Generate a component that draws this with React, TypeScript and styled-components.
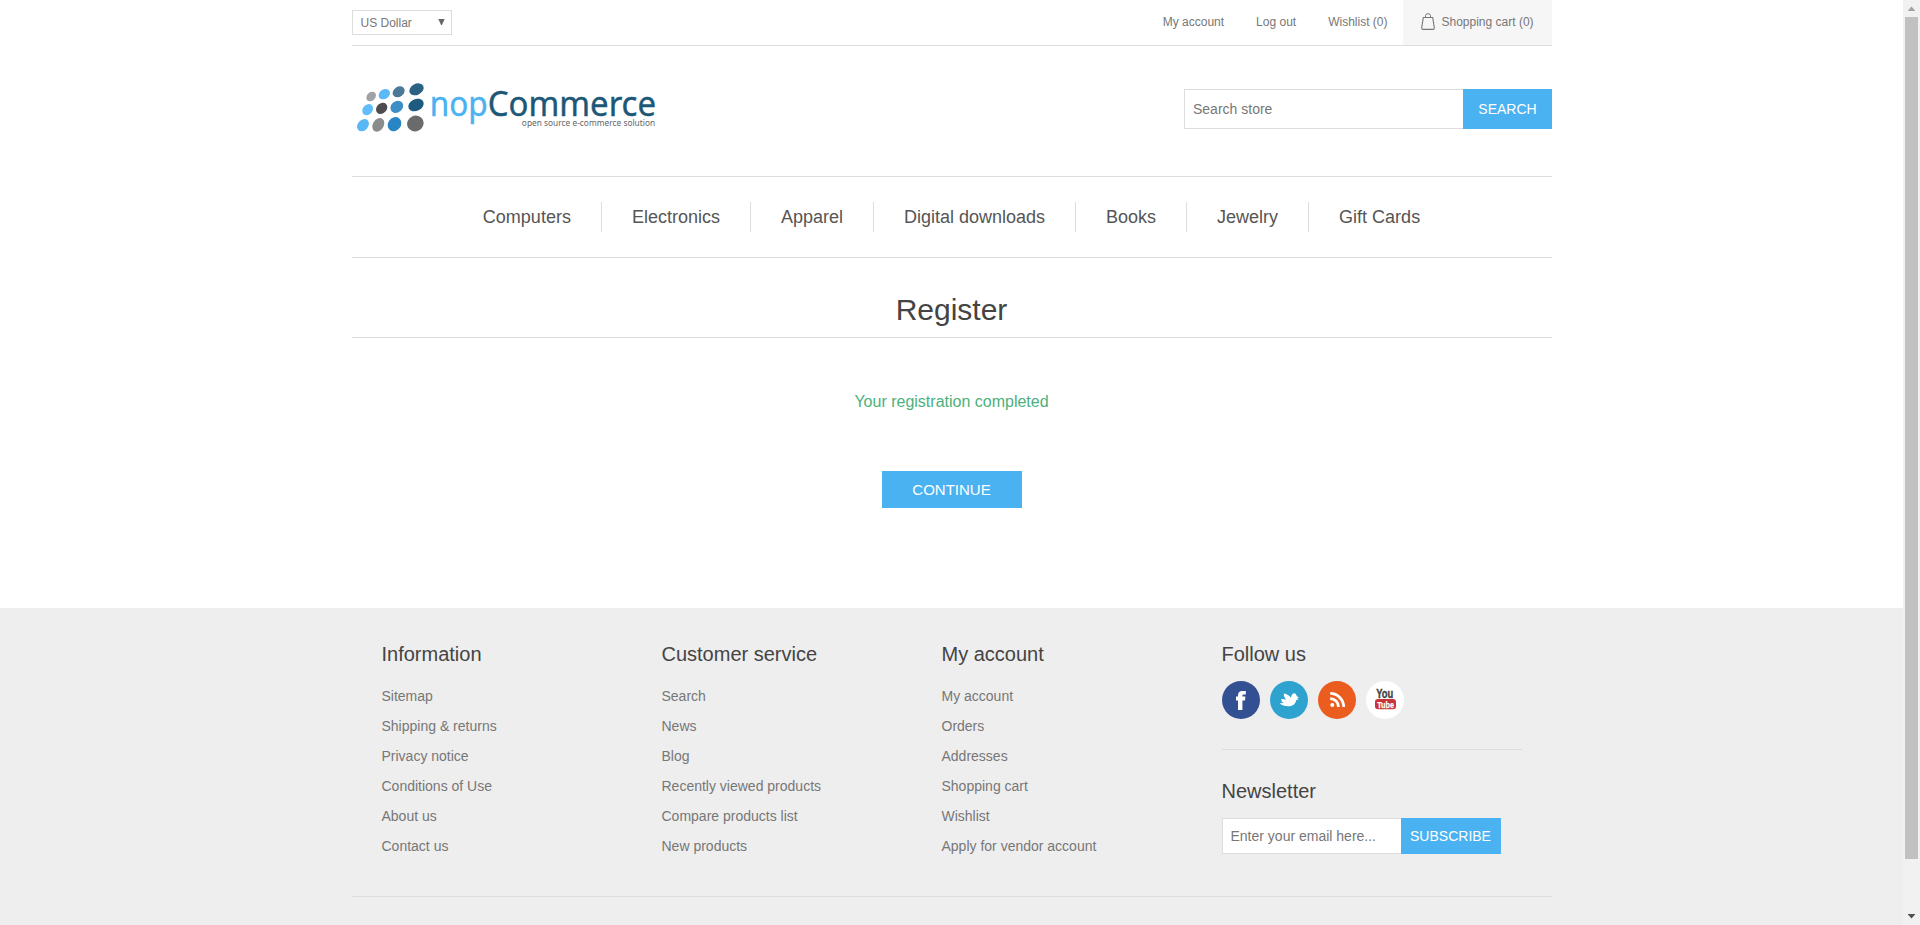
import React from 'react';
import styled, { createGlobalStyle } from 'styled-components';

const GlobalStyle = createGlobalStyle`
  * { box-sizing: border-box; margin: 0; padding: 0; }
  html, body { height: 925px; overflow: hidden; background: #fff; }
  body { font: 14px "Liberation Sans", Arial, sans-serif; color: #777; }
  a { color: inherit; text-decoration: none; }
  ul { list-style: none; }
  input, button { font-family: inherit; border-radius: 0; outline: none; }
`;

const Screen = styled.div`
  display: flex;
  width: 1920px;
  height: 925px;
  overflow: hidden;
`;

const Page = styled.div`
  width: 1903px;
  flex: none;
`;

const Wrapper = styled.div`
  width: 1200px;
  margin: 0 auto;
`;

const HeaderUpper = styled.div`
  display: flex;
  justify-content: space-between;
  height: 46px;
  border-bottom: 1px solid #ddd;
  font-size: 12px;
`;

const CurrencySelect = styled.div`
  display: flex;
  align-items: center;
  justify-content: space-between;
  width: 100px;
  height: 25px;
  margin-top: 10px;
  padding: 0 6px 0 8px;
  border: 1px solid #ddd;
`;

const SelectArrow = styled.svg`
  display: block;
  margin-top: -2px;
`;

const HeaderLinks = styled.div`
  display: flex;
  height: 45px;
  line-height: 45px;
`;

const HeaderLink = styled.a`
  margin-right: 32px;
  &:last-of-type { margin-right: 0; }
`;

const CartLink = styled.div`
  display: flex;
  align-items: center;
  width: 149px;
  margin-left: 15px;
  padding-left: 18px;
  gap: 7px;
  background: #f6f6f6;
`;

const CartIcon = styled.svg`
  display: block;
  margin-top: -3px;
`;

const LinkLabel = styled.span`
  display: block;
  line-height: 14px;
  margin-top: 15px;
`;

const HeaderLower = styled.div`
  display: flex;
  justify-content: space-between;
  height: 130px;
  padding-top: 29px;
`;

const SearchForm = styled.form`
  display: flex;
  margin: 14px -0.5px 0 0;
  height: 40px;
`;

const TextInput = styled.input<{ $width: number }>`
  width: ${(p) => p.$width}px;
  height: 100%;
  padding: 0 8px;
  border: 1px solid #ddd;
  border-right: 0;
  background: #fff;
  color: #777;
  font-size: 14px;
  &::placeholder { color: #777; opacity: 1; }
`;

const ActionButton = styled.button<{ $width: number; $size?: number }>`
  width: ${(p) => p.$width}px;
  height: 100%;
  border: 0;
  background: #4ab2f1;
  color: #fff;
  font-size: ${(p) => p.$size ?? 14}px;
  text-align: center;
`;

const Menu = styled.ul`
  display: flex;
  justify-content: center;
  align-items: center;
  height: 82px;
  border-top: 1px solid #ddd;
  border-bottom: 1px solid #ddd;
`;

const MenuItem = styled.li`
  height: 30px;
  padding: 0 30px;
  border-left: 1px solid #ddd;
  font-size: 18px;
  line-height: 31px;
  color: #555;
  &:first-child { border-left: 0; }
`;

const Main = styled.div`
  display: flex;
  flex-direction: column;
  align-items: center;
  height: 350px;
`;

const PageTitle = styled.h1`
  width: 100%;
  height: 80px;
  padding-top: 34px;
  border-bottom: 1px solid #ddd;
  font-size: 30px;
  font-weight: 400;
  line-height: 35px;
  text-align: center;
  color: #444;
`;

const Result = styled.div`
  margin-top: 55px;
  font-size: 16px;
  line-height: 18px;
  color: #4cb17c;
`;

const ContinueRow = styled.div`
  height: 37px;
  margin-top: 60px;
`;

const Footer = styled.footer`
  height: 317px;
  background: #eee;
`;

const FooterUpper = styled.div`
  display: flex;
  width: 1200px;
  height: 289px;
  margin: 0 auto;
  padding: 35px 30px 0;
  border-bottom: 1px solid #ddd;
`;

const FooterBlock = styled.div<{ $width: number }>`
  width: ${(p) => p.$width}px;
  flex: none;
`;

const BlockTitle = styled.h2`
  font-size: 20px;
  font-weight: 400;
  line-height: 23px;
  color: #444;
`;

const LinkList = styled.ul`
  margin-top: 15px;
`;

const LinkItem = styled.li`
  height: 30px;
  line-height: 30px;
`;

const SocialRow = styled.div`
  display: flex;
  gap: 10px;
  height: 68px;
  margin-top: 15px;
`;

const Newsletter = styled.div`
  padding-top: 30px;
  border-top: 1px solid #ddd;
`;

const NewsletterForm = styled.form`
  display: flex;
  height: 36px;
  margin-top: 15px;
`;

const ScrollTrack = styled.div`
  display: flex;
  flex-direction: column;
  align-items: center;
  width: 17px;
  height: 925px;
  background: #f1f1f1;
`;

const ScrollThumb = styled.div`
  width: 13px;
  height: 842px;
  background: #c1c1c1;
`;

const ScrollArrow = styled.svg`
  display: block;
  flex: none;
`;

const ScrollGap = styled.div`
  flex: 1;
`;

type Dot = [cx: number, cy: number, rx: number, ry: number, angle: number, fill: string];

const logoDots: Dot[] = [
  [92, 289.5, 16.3, 12.5, -45, '#a0a2a5'],
  [131.5, 282.5, 18.3, 14, -35, '#5bb9f9'],
  [174.5, 275.5, 19.2, 15.1, -34, '#4b7897'],
  [228, 268, 22.7, 16.4, -28, '#2b6182'],
  [81.5, 329, 18.3, 14.5, -50, '#61befb'],
  [123.5, 325, 18.8, 15, -45, '#4d4d4f'],
  [169, 320.5, 20.8, 16.7, -40, '#3b8fc6'],
  [226.5, 315, 24, 17.7, -25, '#1d5b80'],
  [67.5, 375.5, 20.3, 15.6, -48, '#58b7f5'],
  [113.5, 374.5, 21.9, 16.2, -58, '#8a8b8c'],
  [162, 372.5, 22.5, 19.2, -52, '#2786c3'],
  [224.5, 370.5, 25.3, 23.2, -25, '#6a6b6c'],
];

const Logo = () => (
  <svg width="310" height="60" viewBox="34.5 225 930 180">
    {logoDots.map(([cx, cy, rx, ry, angle, fill]) => (
      <ellipse key={fill} cx={cx} cy={cy} rx={rx} ry={ry} fill={fill} transform={`rotate(${angle} ${cx} ${cy})`} />
    ))}
    <g fontFamily='"Noto Sans", sans-serif'>
      <text x="267.5" y="348.5" fontSize="102" fill="#4ab2f1" stroke="#4ab2f1" strokeWidth="1.2" textLength="174" lengthAdjust="spacingAndGlyphs">nop</text>
      <text x="441.5" y="348.5" fontSize="102" fill="#1d5777" stroke="#1d5777" strokeWidth="1.2" textLength="505" lengthAdjust="spacingAndGlyphs">Commerce</text>
      <text x="544" y="379" fontSize="26" fill="#666" textLength="400" lengthAdjust="spacingAndGlyphs">open source e-commerce solution</text>
    </g>
  </svg>
);

const Facebook = () => (
  <svg width="38" height="38" viewBox="0 0 38 38">
    <circle cx="19" cy="19" r="19" fill="#335192" />
    <path fill="#fff" d="M16 29V19.4H14V15.6H16V14.4C16 11.4 17.6 10 20.4 10H23.8V13.6H21.8C20.8 13.6 20.4 14.1 20.4 15V15.6H23.4L23 19.4H20.4V29Z" />
  </svg>
);

const Twitter = () => (
  <svg width="38" height="38" viewBox="0 0 38 38">
    <circle cx="19" cy="19" r="19" fill="#2ea3cf" />
    <path fill="#fff" d="M9.6 22.2C11.5 22.5 13 22.2 13.9 21.6C12.5 21.4 11.6 20.8 11.3 19.8H12.2C11.5 19.4 11.1 18.8 11 18C12.6 18.3 14.4 18.3 16 18.4C14.4 16.8 13.8 14.8 13.8 12.6C17 13 19.4 14.6 20.9 16.8C21.2 14.4 22.4 12.6 23.9 12.2C25.1 12 26 12.9 26.2 14C26.8 14.9 27.6 15.9 28.9 16.8C28.2 17 27.8 17.2 27.2 17.4C27.6 17.8 28.1 18 28.6 18.2C27.9 18.6 27.1 18.8 26.3 18.9C25.8 22.5 22.8 25.2 18.8 25.2C14.8 25.2 11.2 24.2 9.6 22.2Z" />
  </svg>
);

const Rss = () => (
  <svg width="38" height="38" viewBox="0 0 38 38">
    <circle cx="19" cy="19" r="19" fill="#eb5d1e" />
    <circle cx="14.3" cy="24" r="2" fill="#fff" />
    <path fill="none" stroke="#fff" strokeWidth="2.8" d="M12.2 17.6A8.3 8.3 0 0 1 20.5 26M12.2 12.4A13.5 13.5 0 0 1 25.7 26" />
  </svg>
);

const YouTube = () => (
  <svg width="38" height="38" viewBox="0 0 38 38">
    <circle cx="19" cy="19" r="19" fill="#fff" />
    <rect x="9" y="18" width="21" height="10.2" rx="3.2" fill="#c83437" />
    <g fontFamily='"Liberation Sans", Arial, sans-serif' fontWeight="700">
      <text x="10.2" y="16.9" fontSize="12.3" fill="#444" stroke="#444" strokeWidth=".4" textLength="17" lengthAdjust="spacingAndGlyphs">You</text>
      <text x="11.2" y="26.5" fontSize="9.6" fill="#fff" stroke="#fff" strokeWidth=".25" textLength="16.8" lengthAdjust="spacingAndGlyphs">Tube</text>
    </g>
  </svg>
);

const menuItems = ['Computers', 'Electronics', 'Apparel', 'Digital downloads', 'Books', 'Jewelry', 'Gift Cards'];

const footerBlocks = [
  { title: 'Information', links: ['Sitemap', 'Shipping & returns', 'Privacy notice', 'Conditions of Use', 'About us', 'Contact us'] },
  { title: 'Customer service', links: ['Search', 'News', 'Blog', 'Recently viewed products', 'Compare products list', 'New products'] },
  { title: 'My account', links: ['My account', 'Orders', 'Addresses', 'Shopping cart', 'Wishlist', 'Apply for vendor account'] },
];

export default function App() {
  return (
    <Screen>
      <GlobalStyle />
      <Page>
        <Wrapper>
          <HeaderUpper>
            <CurrencySelect>
              US Dollar
              <SelectArrow width="7" height="6" viewBox="0 0 7 6">
                <path d="M0.3 0H6.7L3.9 6H3.1Z" fill="#666" />
              </SelectArrow>
            </CurrencySelect>
            <HeaderLinks>
              <HeaderLink href="#"><LinkLabel>My account</LinkLabel></HeaderLink>
              <HeaderLink href="#"><LinkLabel>Log out</LinkLabel></HeaderLink>
              <HeaderLink href="#"><LinkLabel>Wishlist (0)</LinkLabel></HeaderLink>
              <CartLink>
                <CartIcon width="14" height="17" viewBox="0 0 14 17" fill="none" stroke="#777">
                  <path d="M2.3 4.5H11.7L13.3 14.9Q13.3 16.4 12 16.4H2Q.7 16.4 .7 14.9Z" strokeWidth="1.1" />
                  <path d="M4.5 4.5V2.6Q4.5 .7 7 .7T9.5 2.6V4.5" />
                </CartIcon>
                Shopping cart (0)
              </CartLink>
            </HeaderLinks>
          </HeaderUpper>
          <HeaderLower>
            <Logo />
            <SearchForm>
              <TextInput $width={279} placeholder="Search store" />
              <ActionButton $width={89} type="button">SEARCH</ActionButton>
            </SearchForm>
          </HeaderLower>
          <Menu>
            {menuItems.map((item) => (
              <MenuItem key={item}>{item}</MenuItem>
            ))}
          </Menu>
          <Main>
            <PageTitle>Register</PageTitle>
            <Result>Your registration completed</Result>
            <ContinueRow>
              <ActionButton $width={140} $size={15} type="button">CONTINUE</ActionButton>
            </ContinueRow>
          </Main>
        </Wrapper>
        <Footer>
          <FooterUpper>
            {footerBlocks.map((block) => (
              <FooterBlock key={block.title} $width={280}>
                <BlockTitle>{block.title}</BlockTitle>
                <LinkList>
                  {block.links.map((link) => (
                    <LinkItem key={link}><a href="#">{link}</a></LinkItem>
                  ))}
                </LinkList>
              </FooterBlock>
            ))}
            <FooterBlock $width={300}>
              <BlockTitle>Follow us</BlockTitle>
              <SocialRow>
                <Facebook />
                <Twitter />
                <Rss />
                <YouTube />
              </SocialRow>
              <Newsletter>
                <BlockTitle>Newsletter</BlockTitle>
                <NewsletterForm>
                  <TextInput $width={179} placeholder="Enter your email here..." />
                  <ActionButton $width={100} type="button">SUBSCRIBE</ActionButton>
                </NewsletterForm>
              </Newsletter>
            </FooterBlock>
          </FooterUpper>
        </Footer>
      </Page>
      <ScrollTrack>
        <ScrollArrow width="17" height="17" viewBox="0 0 17 17">
          <path d="M8.5 6.5L12 10.5V11H5V10.5Z" fill="#a3a3a3" />
        </ScrollArrow>
        <ScrollThumb />
        <ScrollGap />
        <ScrollArrow width="17" height="17" viewBox="0 0 17 17">
          <path d="M8.5 10.5L12 6.5V6H5V6.5Z" fill="#505050" />
        </ScrollArrow>
      </ScrollTrack>
    </Screen>
  );
}
